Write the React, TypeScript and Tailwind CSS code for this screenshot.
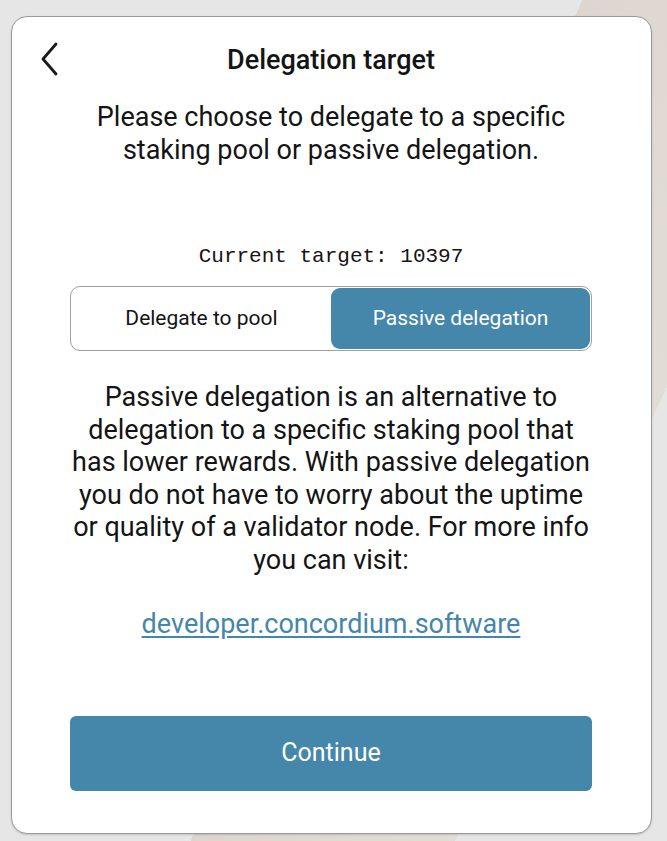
import { useState } from "react";

const BLUE = "bg-[#4586ab]";

export default function App() {
  const [mode, setMode] = useState<"pool" | "passive">("passive");

  return (
    <div className="flex h-[841px] w-[667px] items-start bg-[linear-gradient(115deg,#e6e6e6_0%,#e6e6e6_55%,#ddd6d0_55%,#e2dcd7_80%,#e6e6e6_80%)] pl-[11px] pt-4 font-['Roboto',sans-serif] text-[#141414]">
      <div className="flex h-[818px] w-[641px] flex-col items-center rounded-[16px] border border-[#9a9a9a] bg-white pl-[58px] pr-[59px] pt-[27px] shadow-[0_1px_2px_rgba(0,0,0,0.15)]">
        <div className="relative flex h-8 w-full items-center justify-center">
          <button className="absolute left-[-33px] top-[-1px] flex h-8 w-6 items-center justify-center">
            <svg width="18" height="34" viewBox="0 0 18 34" fill="none">
              <path d="M16 2 L3 17 L16 32" stroke="#1a1a1a" strokeWidth="2.8" strokeLinecap="round" strokeLinejoin="round" />
            </svg>
          </button>
          <h1 className="text-[27px] font-medium leading-8">Delegation target</h1>
        </div>

        <p className="mt-[25px] w-[490px] text-center text-[27px] leading-[33px]">
          Please choose to delegate to a specific staking pool or passive delegation.
        </p>

        <div className="mt-[76px] font-['Liberation_Mono',monospace] text-[21px] leading-[28px]">
          Current target: 10397
        </div>

        <div className="mt-[15px] flex h-[65px] w-full rounded-[10px] border border-[#a0a0a0] p-px">
          <button
            onClick={() => setMode("pool")}
            className={`flex-1 rounded-[9px] text-[21px] ${mode === "pool" ? `${BLUE} text-white` : "text-[#141414]"}`}
          >
            Delegate to pool
          </button>
          <button
            onClick={() => setMode("passive")}
            className={`flex-1 rounded-[9px] text-[21px] ${mode === "passive" ? `${BLUE} text-white` : "text-[#141414]"}`}
          >
            Passive delegation
          </button>
        </div>

        <p className="mt-[30px] w-full text-center text-[27px] leading-[32.6px]">
          Passive delegation is an alternative to delegation to a specific staking pool that has lower rewards. With
          passive delegation you do not have to worry about the uptime or quality of a validator node. For more info
          you can visit:
        </p>

        <a href="#" className="mt-[31px] text-[27px] leading-8 text-[#4586ab] underline underline-offset-[3px]">
          developer.concordium.software
        </a>

        <button className={`mt-[76px] h-[75px] w-full rounded-[6px] ${BLUE} text-[25px] text-white`}>Continue</button>
      </div>
    </div>
  );
}
